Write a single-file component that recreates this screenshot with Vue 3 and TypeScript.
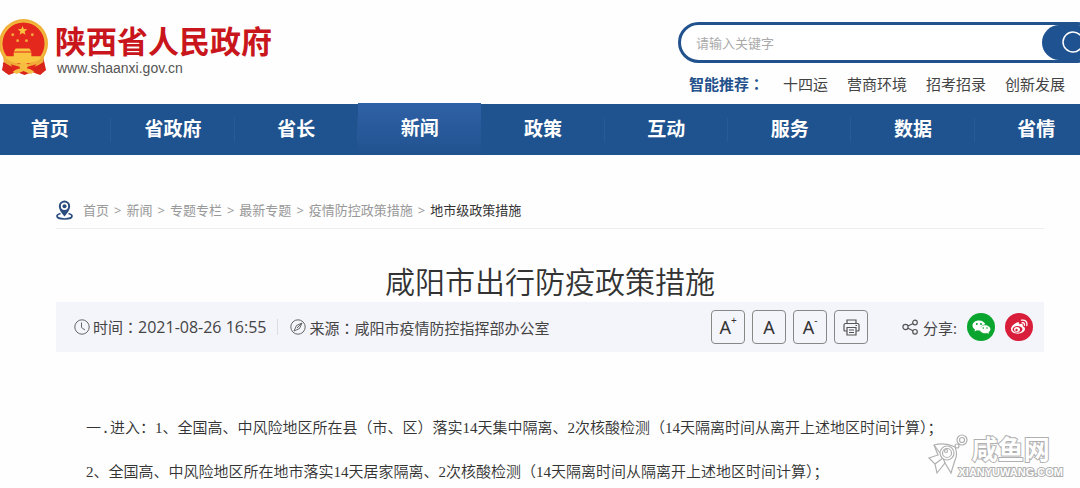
<script setup lang="ts">
import { ref } from 'vue'

interface TextSize {
  mark: string
  label: string
}

const keyword = ref('')
const suggestions: string[] = ['十四运', '营商环境', '招考招录', '创新发展']
const sections: string[] = ['首页', '省政府', '省长', '新闻', '政策', '互动', '服务', '数据', '省情']
const activeSection = '新闻'
const crumbs: string[] = ['首页', '新闻', '专题专栏', '最新专题', '疫情防控政策措施']
const textSizes: TextSize[] = [
  { mark: '+', label: '放大字号' },
  { mark: '', label: '默认字号' },
  { mark: '-', label: '缩小字号' },
]
</script>

<template>
  <div class="page">
    <header class="header">
      <a class="brand" href="#">
        <svg class="emblem" viewBox="0 0 50 60" aria-hidden="true">
          <path d="M5 40 L2 53 L9 58 L17 55 L25 58 L33 55 L41 58 L47 53 L44 40 Z" fill="#d8241b" />
          <circle cx="24" cy="26" r="25" fill="#f2b83c" />
          <circle cx="24" cy="26" r="24" fill="none" stroke="#eda83a" stroke-width="1" />
          <circle cx="24" cy="26" r="21.500" fill="#e5281d" />
          <path d="M23 8l1.300 3.200 3.500.200-2.700 2.200.9 3.400-3-1.900-3 1.900.9-3.400-2.700-2.200 3.500-.2z" fill="#f9c440" />
          <g fill="#f4a63a">
            <circle cx="13" cy="17" r="1.500" /><circle cx="18" cy="23" r="1.500" />
            <circle cx="27" cy="23" r="1.500" /><circle cx="33" cy="17" r="1.500" />
          </g>
          <path d="M16 31h14l2 3h-18zM14 35h18v4h9v4q-18 7-35 0v-4h8z" fill="#f9c440" />
          <path d="M3 39q21 17 42 0l-1 6q-20 14-40 0z" fill="#efad38" />
          <path d="M3 45l5 3 3 9-5-1-3-4zM45 45l-5 3-3 9 5-1 3-4z" fill="#d8241b" />
          <path d="M11 47l4 7 9-4 9 4 4-7-13 4z" fill="#e3261c" />
          <path d="M13 55q5-5 11-3 6-2 11 3l-4 2-7-3-7 3z" fill="#f6bd42" />
          <circle cx="24" cy="49" r="4" fill="#f6bd42" />
        </svg>
        <span class="brand-text">
          <strong class="brand-name">陕西省人民政府</strong>
          <span class="brand-url">www.shaanxi.gov.cn</span>
        </span>
      </a>
      <div class="finder">
        <form class="search" role="search" @submit.prevent>
          <input v-model="keyword" class="search-input" type="text" placeholder="请输入关键字" aria-label="请输入关键字" />
          <button class="search-button" type="submit" aria-label="搜索">
            <svg width="28" height="28" viewBox="0 0 28 28" fill="none" stroke="#fff" stroke-width="1.500" aria-hidden="true">
              <circle cx="11" cy="13" r="10" /><path d="M18 20l7 7" />
            </svg>
          </button>
        </form>
        <div class="suggestions">
          <strong class="suggestions-title">智能推荐<span class="colon">：</span></strong>
          <a v-for="item in suggestions" :key="item" href="#">{{ item }}</a>
        </div>
      </div>
    </header>

    <nav class="nav">
      <a v-for="item in sections" :key="item" href="#" :class="['nav-item', { active: item === activeSection }]">{{ item }}</a>
    </nav>

    <main class="main">
      <div class="crumbs">
        <svg class="pin" width="17" height="20" viewBox="0 0 17 20" aria-hidden="true">
          <path d="M4.500 13.500C2 14.200 1 15 1 16c0 1.700 3.300 3 7.500 3s7.500-1.300 7.500-3c0-1-1-1.800-3.500-2.500" fill="none" stroke="#2a4c7f" stroke-width="1.700" />
          <path fill-rule="evenodd" d="M8.500 0.500a5.700 5.700 0 0 0-5.700 5.700c0 3.300 3 7 5.700 10.300 2.700-3.300 5.700-7 5.700-10.300A5.700 5.700 0 0 0 8.500.500zM8.500 2.600a3.700 3.700 0 1 1 0 7.400 3.700 3.700 0 0 1 0-7.400z" fill="#2a4c7f" />
          <circle cx="8.500" cy="6.300" r="2" fill="#2a4c7f" />
        </svg>
        <template v-for="item in crumbs" :key="item">
          <a href="#">{{ item }}</a><span>&gt;</span>
        </template>
        <span class="current">地市级政策措施</span>
      </div>

      <h1 class="title">咸阳市出行防疫政策措施</h1>

      <div class="info">
        <svg class="info-icon" width="16" height="16" viewBox="0 0 16 16" fill="none" stroke="#666" aria-hidden="true">
          <circle cx="8" cy="8" r="7.200" /><path d="M7.500 3.500V8.500L11 11" />
        </svg>
        <span class="published">时间<span class="colon">：</span><time class="time" datetime="2021-08-26T16:55">2021-08-26 16:55</time></span>
        <svg class="info-icon" width="16" height="16" viewBox="0 0 16 16" fill="none" stroke="#666" aria-hidden="true">
          <circle cx="8" cy="8" r="7.200" /><path d="M12 4L9.500 9.500 4 12 6.500 6.500zM12 4L7 9" />
        </svg>
        <span>来源<span class="colon">：</span>咸阳市疫情防控指挥部办公室</span>
        <div class="tools">
          <button v-for="size in textSizes" :key="size.label" class="tool" type="button" :aria-label="size.label">
            A<sup v-if="size.mark">{{ size.mark }}</sup>
          </button>
          <button class="tool" type="button" aria-label="打印">
            <svg width="17" height="17" viewBox="0 0 17 17" fill="none" stroke="#555" stroke-width="1.200" aria-hidden="true">
              <path d="M4 4V1h9v3M4 12H2Q1 12 1 11V6Q1 4.500 2.500 4.500h12Q16 4.500 16 6v5q0 1-1 1h-2M4 8.500h9V16H4zM6 11h5M6 13.500h5M12.500 6.500h1.500" />
            </svg>
          </button>
        </div>
        <div class="share">
          <svg class="share-icon" width="17" height="16" viewBox="0 0 17 16" fill="none" stroke="#555" stroke-width="1.200" aria-hidden="true">
            <circle cx="3.500" cy="8" r="2.600" /><circle cx="13" cy="3.500" r="2.300" /><circle cx="13" cy="12.800" r="2.300" />
            <path d="M6 7l5-2.500M6 9.200l5 2.500" />
          </svg>
          <span class="share-label">分享:</span>
          <button class="round wechat" type="button" aria-label="微信">
            <svg width="28" height="28" viewBox="0 0 28 28" aria-hidden="true">
              <path d="M12 7.500c-3.800 0-6.500 2.200-6.500 5 0 1.700 1 3 2.500 3.900L7.500 18.500l2.400-1.200q1.700.500 3.500.200C12.800 13.500 15.500 11.300 18.400 11.500 17.800 9.200 15.300 7.500 12 7.500z" fill="#fff" />
              <path d="M18 12.300c-3 0-5.200 1.800-5.200 4s2.200 4 5.200 4q1 0 2-.300l2 1-.500-1.800c1.200-.7 1.900-1.700 1.900-2.900 0-2.200-2.400-4-5.400-4z" fill="#fff" />
              <g fill="#0aa52f"><circle cx="9.800" cy="11" r="1" /><circle cx="14" cy="11" r="1" /><circle cx="16.300" cy="15" r=".8" /><circle cx="20" cy="15" r=".8" /></g>
            </svg>
          </button>
          <button class="round weibo" type="button" aria-label="微博">
            <svg width="28" height="28" viewBox="0 0 28 28" aria-hidden="true">
              <path d="M12 9.500c1.500-.6 2.600.1 2.200 2 2.400-.9 4.200-.3 3.600 1.700 1.500.5 2.200 1.400 2.200 2.600 0 2.700-3.400 4.900-7.300 4.900S6 18.900 6 16.300 9 10.600 12 9.500z" fill="#fff" />
              <ellipse cx="12.500" cy="16.300" rx="4.900" ry="3.300" fill="#d81e3a" />
              <ellipse cx="12" cy="16.500" rx="3" ry="2.500" fill="#fff" />
              <circle cx="11.500" cy="17" r="1.200" fill="#d81e3a" />
              <path d="M16.500 7.200c3.700-.8 6.300 1.900 5.300 5.500M17 9.800c1.800-.3 2.900.8 2.400 2.500" fill="none" stroke="#fff" stroke-width="1.300" stroke-linecap="round" />
            </svg>
          </button>
        </div>
      </div>

      <article class="article">
        <p><span class="ordinal">一.</span>进入：1、全国高、中风险地区所在县（市、区）落实14天集中隔离、2次核酸检测（14天隔离时间从离开上述地区时间计算）；</p>
        <p>2、全国高、中风险地区所在地市落实14天居家隔离、2次核酸检测（14天隔离时间从隔离开上述地区时间计算）；</p>
      </article>
    </main>

    <div class="watermark">
      <svg width="42" height="42" viewBox="0 0 42 42" fill="#fff" stroke="#b0b0b0" stroke-width="1.200" aria-hidden="true">
        <path d="M7 11Q18 8 28 13 31 20 28 26L24 39 18 29 10 39 8 30 2 24 11 21z" />
        <path d="M8 30l8-6 2 5M7 11l6 8" fill="none" />
        <circle cx="20" cy="19" r="7" /><circle cx="20" cy="19" r="4.500" /><circle cx="19" cy="17" r="1.500" />
        <circle cx="35" cy="6" r="5" /><circle cx="35" cy="6" r="2.500" /><circle cx="30" cy="12" r="2" />
      </svg>
      <div class="watermark-text">
        <span class="watermark-name">咸鱼网</span>
        <span class="watermark-url">XIANYUWANG.COM</span>
      </div>
    </div>
  </div>
</template>

<style>
body {
  margin: 0;
  background: #fefefe;
}
</style>

<style scoped>
.page {
  position: relative;
  overflow: hidden;
  min-height: 100vh;
  font-family: "Open Sans", "Noto Sans CJK SC", sans-serif;
  font-size: 15px;
  color: #444;
}
a {
  color: inherit;
  text-decoration: none;
}
button {
  padding: 0;
  border: 0;
  font: inherit;
  color: inherit;
  cursor: pointer;
}
svg {
  display: block;
  flex: none;
}
.colon {
  font-family: "Noto Sans CJK TC", sans-serif;
}
.header {
  display: flex;
  justify-content: space-between;
  align-items: flex-start;
  height: 104px;
}
.brand {
  display: flex;
  gap: 6px;
  padding-top: 18px;
}
.emblem {
  width: 49px;
  height: 59px;
}
.brand-text {
  display: flex;
  flex-direction: column;
  padding-top: 6px;
}
.brand-name {
  font-size: 31px;
  line-height: 35px;
  color: #c9161c;
}
.brand-url {
  font: 14px/18px "Liberation Sans", Arial, sans-serif;
  padding-left: 2px;
  color: #555;
}
.finder {
  width: 420px;
  margin-right: -18px;
  padding-top: 22px;
}
.search {
  display: flex;
  box-sizing: border-box;
  height: 41px;
  border: 3px solid #22528d;
  border-radius: 21px;
  background: #fff;
  overflow: hidden;
}
.search-input {
  flex: 1;
  min-width: 0;
  padding: 0 15px;
  border: 0;
  outline: 0;
  background: none;
  font: 13px "Noto Sans CJK SC", sans-serif;
}
.search-input::placeholder {
  color: #aaa;
}
.search-button {
  width: 53px;
  padding-left: 20px;
  border-radius: 18px 0 0 18px;
  background: #1f5290;
}
.suggestions {
  display: flex;
  gap: 19px;
  padding: 10px 0 0 11px;
  line-height: 22px;
  white-space: nowrap;
}
.suggestions-title {
  color: #24518b;
}
.nav {
  display: grid;
  grid-template-columns: repeat(9, 1fr);
  margin: 0 -18px 0 -12px;
  background: #1f538f;
}
.nav-item {
  font-size: 19px;
  font-weight: 700;
  line-height: 51px;
  text-align: center;
  color: #fff;
  background: linear-gradient(#285a95, #285a95) right center / 1px 24px no-repeat;
}
.nav-item.active {
  margin-top: -1px;
  background: linear-gradient(#2f61a6, #21528f);
}
.main {
  padding: 36px 36px 0 56px;
}
.crumbs {
  display: flex;
  align-items: center;
  gap: 5px;
  height: 37px;
  border-bottom: 1px solid #eee;
  font-size: 13px;
  color: #999;
  white-space: nowrap;
}
.pin {
  margin-right: 5px;
}
.current {
  color: #333;
}
.title {
  margin: 31px 0 0;
  padding-bottom: 1px;
  font-family: "Noto Sans CJK SC DemiLight", "Noto Sans CJK SC", sans-serif;
  font-size: 30px;
  font-weight: 350;
  line-height: 41px;
  text-align: center;
  color: #333;
}
.info {
  display: flex;
  align-items: center;
  height: 50px;
  padding: 0 11px 0 18px;
  background: #f4f4fb;
  white-space: nowrap;
}
.info-icon {
  margin-right: 3px;
}
.published {
  display: flex;
  align-items: center;
  line-height: 16px;
  margin-right: 12px;
  padding-right: 11px;
  border-right: 1px solid #ddd;
}
.time {
  font-size: 16px;
}
.tools {
  display: flex;
  gap: 7px;
  margin-left: auto;
}
.tool {
  display: flex;
  align-items: center;
  justify-content: center;
  box-sizing: border-box;
  width: 34px;
  height: 34px;
  border: 1px solid #888;
  border-radius: 4px;
  background: none;
  font: 18px "Noto Sans", sans-serif;
  color: #333;
}
.tool sup {
  align-self: flex-start;
  font-size: 10px;
  line-height: 18px;
}
.share {
  display: flex;
  align-items: center;
  margin-left: 34px;
}
.share-label {
  margin: 0 10px 0 4px;
}
.round {
  width: 28px;
  height: 28px;
  border-radius: 50%;
}
.wechat {
  margin-right: 10px;
  background: #0aa52f;
}
.weibo {
  background: #d81e3a;
}
.article {
  padding: 54px 0 0 30px;
  font-family: "Liberation Serif", "Noto Sans CJK SC", serif;
  font-weight: 350;
  color: #333;
}
.article p {
  height: 44px;
  margin: 0;
  line-height: 44px;
  white-space: nowrap;
}
.ordinal {
  font-family: "Liberation Mono", "Noto Sans CJK SC", monospace;
  line-height: 20px;
}
.watermark {
  position: absolute;
  right: 17px;
  bottom: 16px;
  display: flex;
  pointer-events: none;
}
.watermark-text {
  display: flex;
  flex-direction: column;
  align-items: center;
  margin-left: -10px;
  color: #fff;
  -webkit-text-stroke: 2px #b0b0b0;
  paint-order: stroke fill;
}
.watermark-name {
  font-size: 26px;
  font-weight: 700;
  line-height: 30px;
}
.watermark-url {
  margin-top: 2px;
  font: 700 11px/12px "Liberation Sans", Arial, sans-serif;
}
</style>
